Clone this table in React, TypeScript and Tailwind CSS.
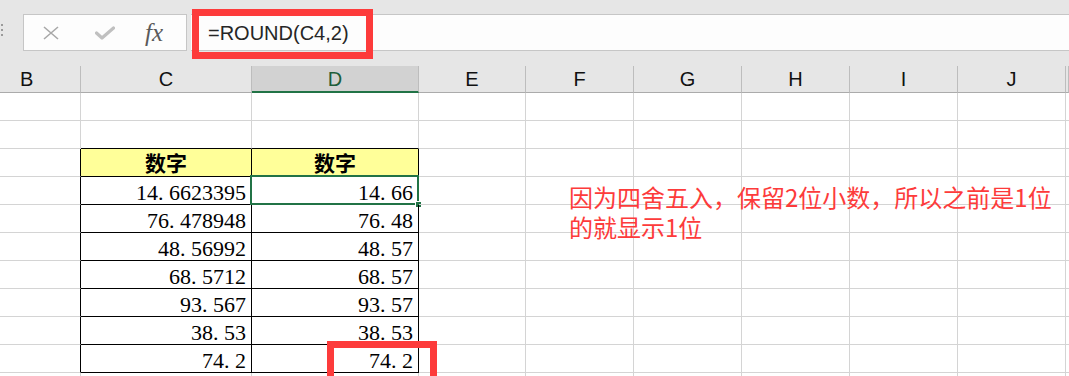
import clsx from 'clsx'

const cn = clsx

const columns = [
  { label: 'B', width: 'w-[81px]' },
  { label: 'C', width: 'w-[171px]' },
  { label: 'D', width: 'w-[167px]' },
  { label: 'E', width: 'w-[107px]' },
  { label: 'F', width: 'w-[108px]' },
  { label: 'G', width: 'w-[108px]' },
  { label: 'H', width: 'w-[108px]' },
  { label: 'I', width: 'w-[108px]' },
  { label: 'J', width: 'w-[108px]' },
  { label: '', width: 'flex-1' },
]

const source = ['14.6623395', '76.478948', '48.56992', '68.5712', '93.567', '38.53', '74.2']
const rounded = ['14.66', '76.48', '48.57', '68.57', '93.57', '38.53', '74.2']

// rows 0-1 blank, 2 = header, 3-9 = data, 10 = partial
const ROW_COUNT = 11
const TABLE_TOP = 2
const TABLE_BOTTOM = 9

function NumberText({ value }: { value: string }) {
  const [whole, frac] = value.split('.')
  return (
    <span className="whitespace-nowrap">
      {whole}
      <span className="inline-block w-[11px] text-left">.</span>
      {frac}
    </span>
  )
}

function FormulaBar() {
  return (
    <div className="flex h-[66px] items-start bg-[#e6e6e6] pt-[14px]">
      <div className="flex w-[23px] flex-col gap-[3px] pl-[1px] pt-[10px]">
        <span className="h-[2px] w-[2px] bg-[#9a9a9a]" />
        <span className="h-[2px] w-[2px] bg-[#9a9a9a]" />
        <span className="h-[2px] w-[2px] bg-[#9a9a9a]" />
      </div>
      <div className="flex h-[37px] w-[164px] items-center border border-[#c6c6c6] bg-[#fdfdfd]">
        <svg width="18" height="14" viewBox="0 0 18 14" className="ml-[18px]">
          <path d="M2 1 L16 13 M16 1 L2 13" stroke="#a8a8a8" strokeWidth="1.6" fill="none" />
        </svg>
        <svg width="20" height="14" viewBox="0 0 20 14" className="ml-[35px]">
          <path d="M1.5 7 L7 12 L18.5 2" stroke="#c0c0c0" strokeWidth="3.2" strokeLinecap="round" strokeLinejoin="round" fill="none" />
        </svg>
        <span className="ml-[30px] font-['Liberation_Serif',serif] text-[25px] italic leading-none text-[#5a5a5a]">
          fx
        </span>
      </div>
      <div className="ml-[4px] flex h-[37px] flex-1 items-center border-y border-[#c6c6c6] bg-[#fdfdfd] pl-[17px] font-['Liberation_Sans',sans-serif] text-[20px] text-[#262626]">
        =ROUND(C4,2)
      </div>
    </div>
  )
}

function ColumnHeaders() {
  return (
    <div className="flex h-[27px] bg-[#e6e6e6]">
      {columns.map((col, i) => (
        <div
          key={i}
          className={cn(
            'flex shrink-0 items-center border-r font-["Liberation_Sans",sans-serif] text-[20px] leading-none',
            col.width,
            i === 0 ? 'justify-start pl-[20px]' : 'justify-center',
            i === 2
              ? 'border-b-2 border-r-[#bdbdbd] border-b-[#217346] bg-[#d2d2d2] text-[#1e5e3a]'
              : 'border-b border-r-[#bdbdbd] border-b-[#ababab] text-[#111]'
          )}
        >
          {col.label}
        </div>
      ))}
    </div>
  )
}

function Cell({ row, col }: { row: number; col: number }) {
  const inTable = row >= TABLE_TOP && row <= TABLE_BOTTOM
  const blackRight = inTable && col <= 2
  const blackBottom = (col === 1 || col === 2) && row >= TABLE_TOP - 1 && row <= TABLE_BOTTOM
  const isHeader = row === TABLE_TOP && (col === 1 || col === 2)
  const isData = row > TABLE_TOP && row <= TABLE_BOTTOM && (col === 1 || col === 2)
  const isSelected = row === TABLE_TOP + 1 && col === 2
  const values = col === 1 ? source : rounded

  return (
    <div
      className={cn(
        'relative flex h-[28px] shrink-0 border-r border-b',
        columns[col].width,
        blackRight ? 'border-r-black' : 'border-r-[#d4d4d4]',
        blackBottom ? 'border-b-black' : 'border-b-[#d4d4d4]',
        isHeader && 'bg-[#ffff99]',
        isHeader
          ? 'items-center justify-center font-["Noto_Sans_CJK_SC",sans-serif] text-[21px] font-bold leading-none text-black'
          : 'items-end justify-end pr-[5px] font-["Liberation_Serif",serif] text-[22px] leading-[22px] text-black'
      )}
    >
      {isHeader && '数字'}
      {isData && <NumberText value={values[row - TABLE_TOP - 1]} />}
      {isSelected && (
        <>
          <div className="pointer-events-none absolute left-[-2px] top-[-2px] h-[30px] w-[169px] border-2 border-[#217346]" />
          <div className="absolute bottom-[-4px] right-[-4px] h-[7px] w-[7px] border border-white bg-[#217346]" />
        </>
      )}
    </div>
  )
}

export default function App() {
  return (
    <div className="relative h-[376px] w-[1069px] overflow-hidden bg-white">
      <FormulaBar />
      <ColumnHeaders />
      <div className="flex flex-col">
        {Array.from({ length: ROW_COUNT }, (_, row) => (
          <div key={row} className="flex">
            {columns.map((_, col) => (
              <Cell key={col} row={row} col={col} />
            ))}
          </div>
        ))}
      </div>

      <div className="absolute left-[569px] top-[182px] font-['Noto_Sans_CJK_SC',sans-serif] text-[24px] leading-[30px] text-[#fd3b3b]">
        <p>因为四舍五入，保留2位小数，所以之前是1位</p>
        <p>的就显示1位</p>
      </div>

      <div className="pointer-events-none absolute left-[192px] top-[9px] h-[50px] w-[181px] border-[7px] border-[#fd3b3b]" />
      <div className="pointer-events-none absolute left-[327px] top-[341px] h-[50px] w-[110px] border-[7px] border-[#fd3b3b]" />
    </div>
  )
}
